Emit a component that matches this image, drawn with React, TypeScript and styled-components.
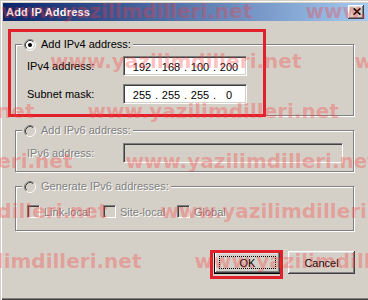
import styled, { createGlobalStyle } from 'styled-components'

const GlobalStyle = createGlobalStyle`
  html, body {
    margin: 0;
    padding: 0;
    background: #d4d0c8;
  }
  body {
    font-family: 'Liberation Sans', Arial, sans-serif;
    font-size: 11px;
    color: #000;
  }
`

const WATERMARK = 'www.yazilimdilleri.net'
// start offset of each watermark line, px
const watermarkRows = [1, 50, -217, -179, -144, -110]

const Radio = ({ checked, disabled }: { checked?: boolean; disabled?: boolean }) => (
  <RadioIcon width='12' height='12' viewBox='0 0 12 12'>
    <circle cx='6' cy='6' r='4.2' fill={disabled ? '#d4d0c8' : '#fff'} />
    <path d='M2.11 9.89 A5.5 5.5 0 0 1 9.89 2.11' fill='none' stroke='#808080' />
    <path d='M9.89 2.11 A5.5 5.5 0 0 1 2.11 9.89' fill='none' stroke='#fff' />
    <path d='M2.82 9.18 A4.5 4.5 0 0 1 9.18 2.82' fill='none' stroke='#404040' />
    <path d='M9.18 2.82 A4.5 4.5 0 0 1 2.82 9.18' fill='none' stroke='#d4d0c8' />
    {checked && <circle cx='6' cy='6' r='2' fill='#000' />}
  </RadioIcon>
)

const IpField = ({ octets }: { octets: string[] }) => (
  <Sunken $width={124}>
    <Octets>
      {octets.map((o, i) => (
        <>
          {i > 0 && <Dot>.</Dot>}
          <Octet key={i}>{o}</Octet>
        </>
      ))}
    </Octets>
  </Sunken>
)

const App = () => {
  return (
    <>
      <GlobalStyle />
      <Window>
        <TitleBar>
          <Title>Add IP Address</Title>
          <CloseButton>
            <svg width='8' height='7' viewBox='0 0 8 7'>
              <path d='M0.6 0.4 L7.4 6.6 M7.4 0.4 L0.6 6.6' stroke='#000' strokeWidth='1.7' />
            </svg>
          </CloseButton>
        </TitleBar>

        <Body>
          <Group>
            <Legend>
              <Radio checked />
              <span>Add IPv4 address:</span>
            </Legend>
            <GroupContent $top={5} $bottom={11} $gap={8}>
              <FieldRow>
                <FieldLabel>IPv4 address:</FieldLabel>
                <IpField octets={['192', '168', '100', '200']} />
              </FieldRow>
              <FieldRow>
                <FieldLabel>Subnet mask:</FieldLabel>
                <IpField octets={['255', '255', '255', '0']} />
              </FieldRow>
            </GroupContent>
          </Group>

          <Group $mt={8}>
            <Legend $disabled>
              <Radio disabled />
              <span>Add IPv6 address:</span>
            </Legend>
            <GroupContent $top={6} $bottom={8}>
              <FieldRow>
                <FieldLabel $disabled>IPv6 address:</FieldLabel>
                <Sunken $width={220} $disabled />
              </FieldRow>
            </GroupContent>
          </Group>

          <Group $mt={8}>
            <Legend $disabled>
              <Radio disabled />
              <span>Generate IPv6 addresses:</span>
            </Legend>
            <GroupContent $top={12} $bottom={12}>
              <CheckRow>
                <CheckItem>
                  <CheckBox />
                  <DisabledText>Link-local</DisabledText>
                </CheckItem>
                <CheckItem>
                  <CheckBox />
                  <DisabledText>Site-local</DisabledText>
                </CheckItem>
                <CheckItem>
                  <CheckBox />
                  <DisabledText>Global</DisabledText>
                </CheckItem>
              </CheckRow>
            </GroupContent>
          </Group>

          <ButtonRow>
            <Button $default>
              <FocusRing>OK</FocusRing>
            </Button>
            <Button>Cancel</Button>
          </ButtonRow>
        </Body>

        <Highlight $left={8} $top={29} $width={258} $height={88} />
        <Highlight $left={210} $top={250} $width={73} $height={29} />

        <Watermark>
          {watermarkRows.map((shift, i) => (
            <WatermarkRow key={i} style={{ marginLeft: shift }}>
              <span>{WATERMARK}</span>
              <span>{WATERMARK}</span>
              <span>{WATERMARK}</span>
            </WatermarkRow>
          ))}
        </Watermark>
      </Window>
    </>
  )
}

const Window = styled.div`
  position: relative;
  width: 368px;
  height: 300px;
  box-sizing: border-box;
  padding: 3px 0 0 3px;
  background: #d4d0c8;
  box-shadow: inset 1px 1px 0 #d4d0c8, inset 2px 2px 0 #fff,
    inset 0 -1px 0 #404040, inset 0 -2px 0 #808080;
  display: flex;
  flex-direction: column;
  overflow: hidden;
`

const TitleBar = styled.div`
  height: 18px;
  display: flex;
  align-items: center;
  justify-content: space-between;
  padding: 0 4px 0 3px;
  background: linear-gradient(to right, #0a246a, #a6caf0);
`

const Title = styled.div`
  color: #fff;
  font-weight: bold;
  font-size: 11px;
  letter-spacing: 0.2px;
`

const CloseButton = styled.div`
  width: 16px;
  height: 14px;
  box-sizing: border-box;
  display: flex;
  align-items: center;
  justify-content: center;
  padding: 0 0 1px 1px;
  background: #d4d0c8;
  box-shadow: inset -1px -1px 0 #404040, inset 1px 1px 0 #fff,
    inset -2px -2px 0 #808080, inset 2px 2px 0 #dfdfdf;
`

const Body = styled.div`
  display: flex;
  flex-direction: column;
  padding: 17px 14px 0 12px;
`

const Group = styled.fieldset<{ $mt?: number }>`
  margin: ${(p) => p.$mt ?? 0}px 0 0 0;
  padding: 0;
  min-width: 0;
  border: 1px solid #808080;
  box-shadow: 1px 1px 0 #fff, inset 1px 1px 0 #fff;
`

const Legend = styled.legend<{ $disabled?: boolean }>`
  margin-left: 6px;
  padding: 0 2px;
  height: 13px;
  line-height: 13px;
  display: flex;
  align-items: center;
  gap: 5px;
  background: #d4d0c8;
  color: ${(p) => (p.$disabled ? '#808080' : '#000')};
  text-shadow: ${(p) => (p.$disabled ? '1px 1px 0 #fff' : 'none')};
`

const RadioIcon = styled.svg`
  display: block;
  flex: none;
`

const GroupContent = styled.div<{ $top: number; $bottom: number; $gap?: number }>`
  display: flex;
  flex-direction: column;
  gap: ${(p) => p.$gap ?? 0}px;
  padding: ${(p) => p.$top}px 0 ${(p) => p.$bottom}px 11px;
`

const FieldRow = styled.div`
  display: flex;
  align-items: center;
  height: 20px;
`

const FieldLabel = styled.div<{ $disabled?: boolean }>`
  width: 96px;
  color: ${(p) => (p.$disabled ? '#808080' : '#000')};
  text-shadow: ${(p) => (p.$disabled ? '1px 1px 0 #fff' : 'none')};
`

const Sunken = styled.div<{ $width: number; $disabled?: boolean }>`
  width: ${(p) => p.$width}px;
  height: 20px;
  box-sizing: border-box;
  border: 1px solid;
  border-color: #808080 #fff #fff #808080;
  box-shadow: inset 1px 1px 0 #404040, inset -1px -1px 0 #d4d0c8;
  background: ${(p) => (p.$disabled ? '#d4d0c8' : '#fff')};
  display: flex;
  align-items: center;
`

const Octets = styled.div`
  display: flex;
  align-items: center;
  padding-left: 6px;
  padding-top: 1px;
`

const Octet = styled.span`
  width: 24px;
  text-align: center;
`

const Dot = styled.span`
  width: 5px;
  text-align: center;
`

const CheckRow = styled.div`
  display: grid;
  grid-template-columns: 76px 74px auto;
  align-items: center;
  height: 13px;
`

const CheckItem = styled.div`
  display: flex;
  align-items: center;
  gap: 4px;
`

const CheckBox = styled.span`
  width: 13px;
  height: 13px;
  box-sizing: border-box;
  border: 1px solid;
  border-color: #808080 #fff #fff #808080;
  box-shadow: inset 1px 1px 0 #404040, inset -1px -1px 0 #d4d0c8;
  background: #d4d0c8;
  flex: none;
`

const DisabledText = styled.span`
  color: #808080;
  text-shadow: 1px 1px 0 #fff;
`

const ButtonRow = styled.div`
  display: flex;
  justify-content: flex-end;
  gap: 7px;
  margin-top: 20px;
  margin-right: -1px;
`

const Button = styled.div<{ $default?: boolean }>`
  width: 67px;
  height: 23px;
  box-sizing: border-box;
  display: flex;
  align-items: center;
  justify-content: center;
  padding: ${(p) => (p.$default ? '4px' : '0')};
  background: #d4d0c8;
  border: ${(p) => (p.$default ? '1px solid #000' : 'none')};
  box-shadow: inset -1px -1px 0 #404040, inset 1px 1px 0 #fff,
    inset -2px -2px 0 #808080, inset 2px 2px 0 #dfdfdf;
`

const FocusRing = styled.div`
  flex: 1;
  align-self: stretch;
  display: flex;
  align-items: center;
  justify-content: center;
  border: 1px dotted #000;
`

const Highlight = styled.div<{ $left: number; $top: number; $width: number; $height: number }>`
  position: absolute;
  left: ${(p) => p.$left}px;
  top: ${(p) => p.$top}px;
  width: ${(p) => p.$width}px;
  height: ${(p) => p.$height}px;
  box-sizing: border-box;
  border: 3px solid #e0202a;
`

const Watermark = styled.div`
  position: absolute;
  inset: 0;
  top: -14px;
  display: flex;
  flex-direction: column;
  pointer-events: none;
  overflow: hidden;
`

const WatermarkRow = styled.div`
  display: flex;
  gap: 53px;
  height: 50px;
  line-height: 50px;
  white-space: nowrap;
  font-family: 'DejaVu Sans', Verdana, sans-serif;
  font-weight: bold;
  font-size: 20px;
  color: rgba(255, 55, 55, 0.33);
`

export default App
